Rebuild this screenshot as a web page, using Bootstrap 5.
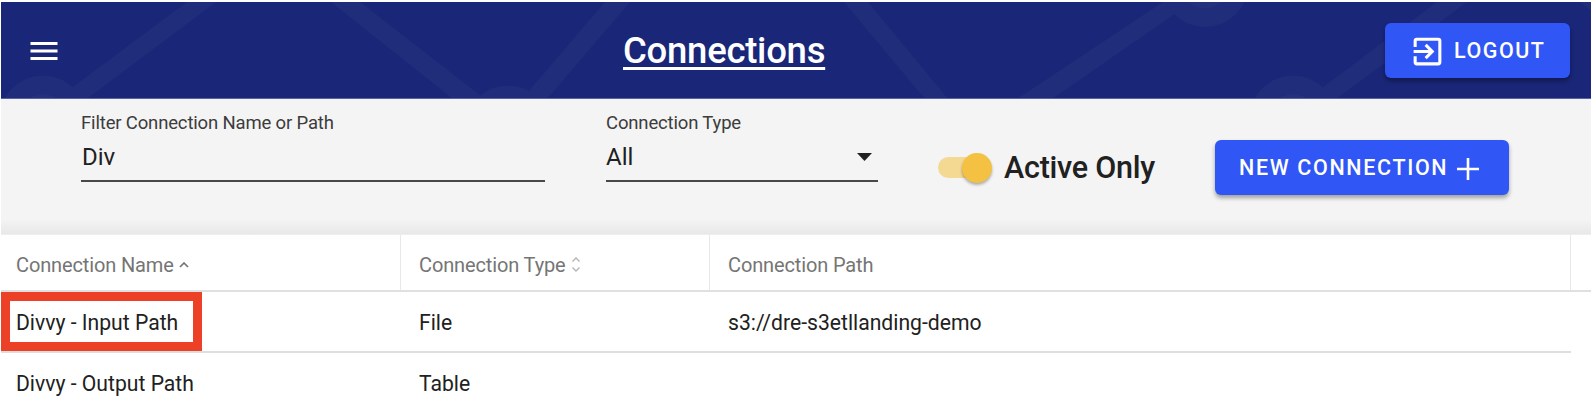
<!DOCTYPE html>
<html lang="en">
<head>
<meta charset="utf-8">
<title>Connections</title>
<link href="https://cdn.jsdelivr.net/npm/bootstrap@5.3.0/dist/css/bootstrap.min.css" rel="stylesheet">
<style>
body{font-family:Roboto,"Liberation Sans",sans-serif;color:#212121;background:#fff;overflow:hidden}
.shell{width:1590px;margin:2px 0 0 1px}
.topbar{height:97px;background:#1a2678;padding:0 21px 0 25px;position:relative;border-bottom:1px solid #5a62a6}
.pattern{position:absolute;inset:0;pointer-events:none}
.topbar>*:not(.pattern){position:relative}
.menu-slot{width:597px;padding-top:1px}
.title{font-size:36.5px;line-height:44px;font-weight:500;letter-spacing:-.26px;color:#fff;padding-top:1px;text-decoration:underline;text-decoration-thickness:3px;text-underline-offset:4px;text-decoration-skip-ink:none}
.action{height:55px;background:#3056f5;color:#fff;font-size:21.5px;font-weight:500;letter-spacing:1.65px;border:0;border-radius:6px;padding:0;line-height:55px;box-shadow:0 3px 4px rgba(0,0,0,.35);text-transform:uppercase}
.action:hover{background:#3056f5;color:#fff}
.logout{width:185px;padding-left:24px}
.logout-text{margin-left:8px;letter-spacing:1.5px}
.new-connection{width:294px;margin:41px 82px 0 0;padding-left:24px}
.filters{height:136px;background:linear-gradient(#f4f4f4 0 120px,#e8e8e8 135px,#f4f4f4);padding-left:80px}
.field{border-bottom:2px solid #484848;height:83px;padding-top:12px}
.name-field{width:464px}
.type-field{width:272px;margin-left:61px}
.field label{display:block;font-size:18.5px;letter-spacing:-.16px;line-height:25px;color:#3c3c3c}
.value{font-size:24px;line-height:32px;margin-top:5px}
.track{width:53px;height:21px;border-radius:11px;background:#f4d993}
.thumb{width:30px;height:30px;border-radius:50%;background:#f5c143;box-shadow:0 2px 3px rgba(0,0,0,.3);margin-left:24px}
.active-text{font-size:30.5px;line-height:36px;font-weight:500;letter-spacing:-.25px;margin-left:13px;padding-top:1px}
.grid-head,.grid-row{display:grid;grid-template-columns:400px 309px 861px 20px}
.grid-head{height:57px;color:#757575;font-size:20px;letter-spacing:-.13px;border-bottom:2px solid #e0e0e0}
.grid-head>div{border-right:1px solid #e8e8e8;padding:4px 0 0 18px}
.grid-head>div:first-child,.grid-row>div:first-child{padding-left:15px}
.grid-head>div:last-child{border:0}
.grid-row{width:1570px;grid-template-columns:400px 309px 861px;font-size:21.15px}
.grid-row>div{padding-left:18px}
.first-row{height:61px;border-bottom:2px solid #dedede}
.first-row>div{padding-top:3px}
.marked{position:absolute;left:0;top:0;width:201px;height:59px;border:9px solid #ec4027}
</style>
</head>
<body>
<div class="shell">
<header class="topbar d-flex align-items-center">
<svg class="pattern" width="1590" height="96" viewBox="1 2 1590 96"><g fill="#202d7b">
<path d="M187 2h29L88 98l-4 3H54z"/><path d="M331 2h29l125 97h-32z"/><path d="M605 2h25L547 99h-25z"/><path d="M844 2h24l80 97h-23z"/><path d="M1163 2h29L1052 99h-35z"/><path d="M1437 2h30L1336 99h-29z"/><path d="M1580 2h11v9z"/>
<circle cx="43" cy="119" r="43.5"/><circle cx="508" cy="129" r="43.5"/><circle cx="1205" cy="-16.500" r="43.500"/><circle cx="1293" cy="119" r="43.500"/></g>
<g fill="#24317c"><circle cx="43" cy="119" r="25"/><circle cx="1205" cy="-16.500" r="25"/><circle cx="1293" cy="119" r="25"/></g></svg>
<div class="menu-slot"><svg width="36" height="36" viewBox="0 0 24 24" fill="#fff" class="d-block"><path d="M3 18h18v-2H3v2zm0-5h18v-2H3v2zm0-7v2h18V6H3z"/></svg></div>
<div class="title">Connections</div>
<button class="btn action d-flex align-items-center logout ms-auto"><svg width="37" height="37" viewBox="0 0 24 24" fill="#fff" class="flex-shrink-0" style="margin-top:3px"><path d="M10.090 15.590 11.500 17l5-5-5-5-1.410 1.410L12.670 11H3v2h9.670l-2.580 2.590zM19 3H5a2 2 0 0 0-2 2v4h2V5h14v14H5v-4H3v4a2 2 0 0 0 2 2h14a2 2 0 0 0 2-2V5a2 2 0 0 0-2-2z"/></svg><span class="logout-text">Logout</span></button>
</header>
<section class="filters d-flex align-items-start">
<div class="field name-field"><label>Filter Connection Name or Path</label><div class="value" style="padding-left:1px">Div</div></div>
<div class="field type-field"><label>Connection Type</label><div class="value d-flex justify-content-between"><span>All</span><svg width="15" height="8" viewBox="0 0 15 8" style="margin:12px 6px 0 0"><path d="M0 0h15L7.500 8z" fill="#212121"/></svg></div></div>
<div class="d-flex align-items-center" style="margin:50px 0 0 60px"><div class="track d-flex align-items-center"><div class="thumb flex-shrink-0"></div></div><span class="active-text">Active Only</span></div>
<button class="btn action new-connection d-flex align-items-center ms-auto"><span class="new-text">New Connection</span><svg width="22" height="22" viewBox="0 0 22 22" style="margin:3px 0 0 9px"><path d="M11 0v22M0 11h22" stroke="#fff" stroke-width="2.600"/></svg></button>
</section>
<main>
<div class="grid-head"><div class="d-flex align-items-center"><span>Connection Name</span><svg width="10" height="6" viewBox="0 0 10 6" fill="none" stroke="#757575" stroke-width="1.700" style="margin-left:5px"><path d="m1 5 4-4 4 4"/></svg></div><div class="d-flex align-items-center"><span>Connection Type</span><svg width="8" height="15" viewBox="0 0 8 15" fill="none" stroke="#b5b5b5" stroke-width="1.400" style="margin-left:6px"><path d="m.5 4.500 3.500-3.500 3.500 3.500m-7 6L4 14l3.500-3.500"/></svg></div><div class="d-flex align-items-center">Connection Path</div><div></div></div>
<div class="grid-row first-row position-relative align-items-center"><div>Divvy - Input Path</div><div>File</div><div>s3://dre-s3etllanding-demo</div><span class="marked"></span></div>
<div class="grid-row align-items-center" style="height:62px"><div>Divvy - Output Path</div><div>Table</div><div></div></div>
</main>
</div>
<script src="https://cdn.jsdelivr.net/npm/bootstrap@5.3.0/dist/js/bootstrap.bundle.min.js"></script>
</body>
</html>
